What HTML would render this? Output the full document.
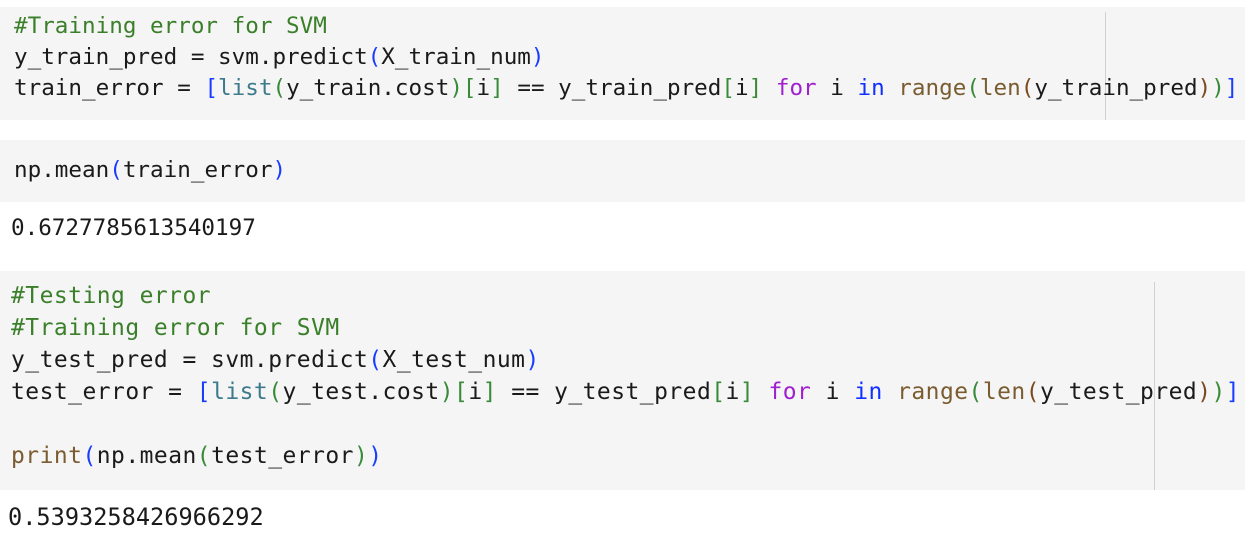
<!DOCTYPE html>
<html><head><meta charset="utf-8"><style>
body{margin:0;width:1258px;height:534px;background:#fff;position:relative;overflow:hidden;font-family:"DejaVu Sans Mono","Liberation Mono",monospace;font-size:22.6px;color:#1a1a1a}
.cell{position:absolute;left:0;width:1245px;background:#f5f5f5}
.l{position:absolute;white-space:pre;line-height:32px}
.c{color:#3a7f2a}.b1{color:#1a3cff}.b2{color:#3a8a3a}.b3{color:#7a4a20}.bi{color:#3d7a8c}.k{color:#a020d0}.kb{color:#1030ff}.f{color:#7a5c30}
.vl{position:absolute;width:1px;background:#d0d0d0}
.big{font-size:22.95px;letter-spacing:0.48px}
</style></head><body>
<div class="cell" style="top:7px;height:113px"></div>
<div class="vl" style="left:1105px;top:12px;height:108px"></div>
<div class="l" style="left:14px;top:10px"><span class="c">#Training error for SVM</span></div>
<div class="l" style="left:14px;top:41px">y_train_pred = svm.predict<span class="b1">(</span>X_train_num<span class="b1">)</span></div>
<div class="l" style="left:14px;top:72px">train_error = <span class="b1">[</span><span class="bi">list</span><span class="b2">(</span>y_train.cost<span class="b2">)[</span>i<span class="b2">]</span> == y_train_pred<span class="b2">[</span>i<span class="b2">]</span> <span class="k">for</span> i <span class="kb">in</span> <span class="f">range</span><span class="b2">(</span><span class="f">len</span><span class="b3">(</span>y_train_pred<span class="b3">)</span><span class="b2">)</span><span class="b1">]</span></div>

<div class="cell" style="top:140px;height:62px"></div>
<div class="l" style="left:14px;top:154px">np.mean<span class="b1">(</span>train_error<span class="b1">)</span></div>
<div class="l" style="left:11px;top:212px">0.6727785613540197</div>

<div class="cell" style="top:271px;height:219px"></div>
<div class="vl" style="left:1154px;top:282px;height:208px"></div>
<div class="l big" style="left:11px;top:280px"><span class="c">#Testing error</span></div>
<div class="l big" style="left:11px;top:312px"><span class="c">#Training error for SVM</span></div>
<div class="l big" style="left:11px;top:344px">y_test_pred = svm.predict<span class="b1">(</span>X_test_num<span class="b1">)</span></div>
<div class="l big" style="left:11px;top:376px">test_error = <span class="b1">[</span><span class="bi">list</span><span class="b2">(</span>y_test.cost<span class="b2">)[</span>i<span class="b2">]</span> == y_test_pred<span class="b2">[</span>i<span class="b2">]</span> <span class="k">for</span> i <span class="kb">in</span> <span class="f">range</span><span class="b2">(</span><span class="f">len</span><span class="b3">(</span>y_test_pred<span class="b3">)</span><span class="b2">)</span><span class="b1">]</span></div>
<div class="l big" style="left:11px;top:440px"><span class="f">print</span><span class="b1">(</span>np.mean<span class="b2">(</span>test_error<span class="b2">)</span><span class="b1">)</span></div>
<div class="l" style="left:8px;top:501px;font-size:23.6px">0.5393258426966292</div>
</body></html>
